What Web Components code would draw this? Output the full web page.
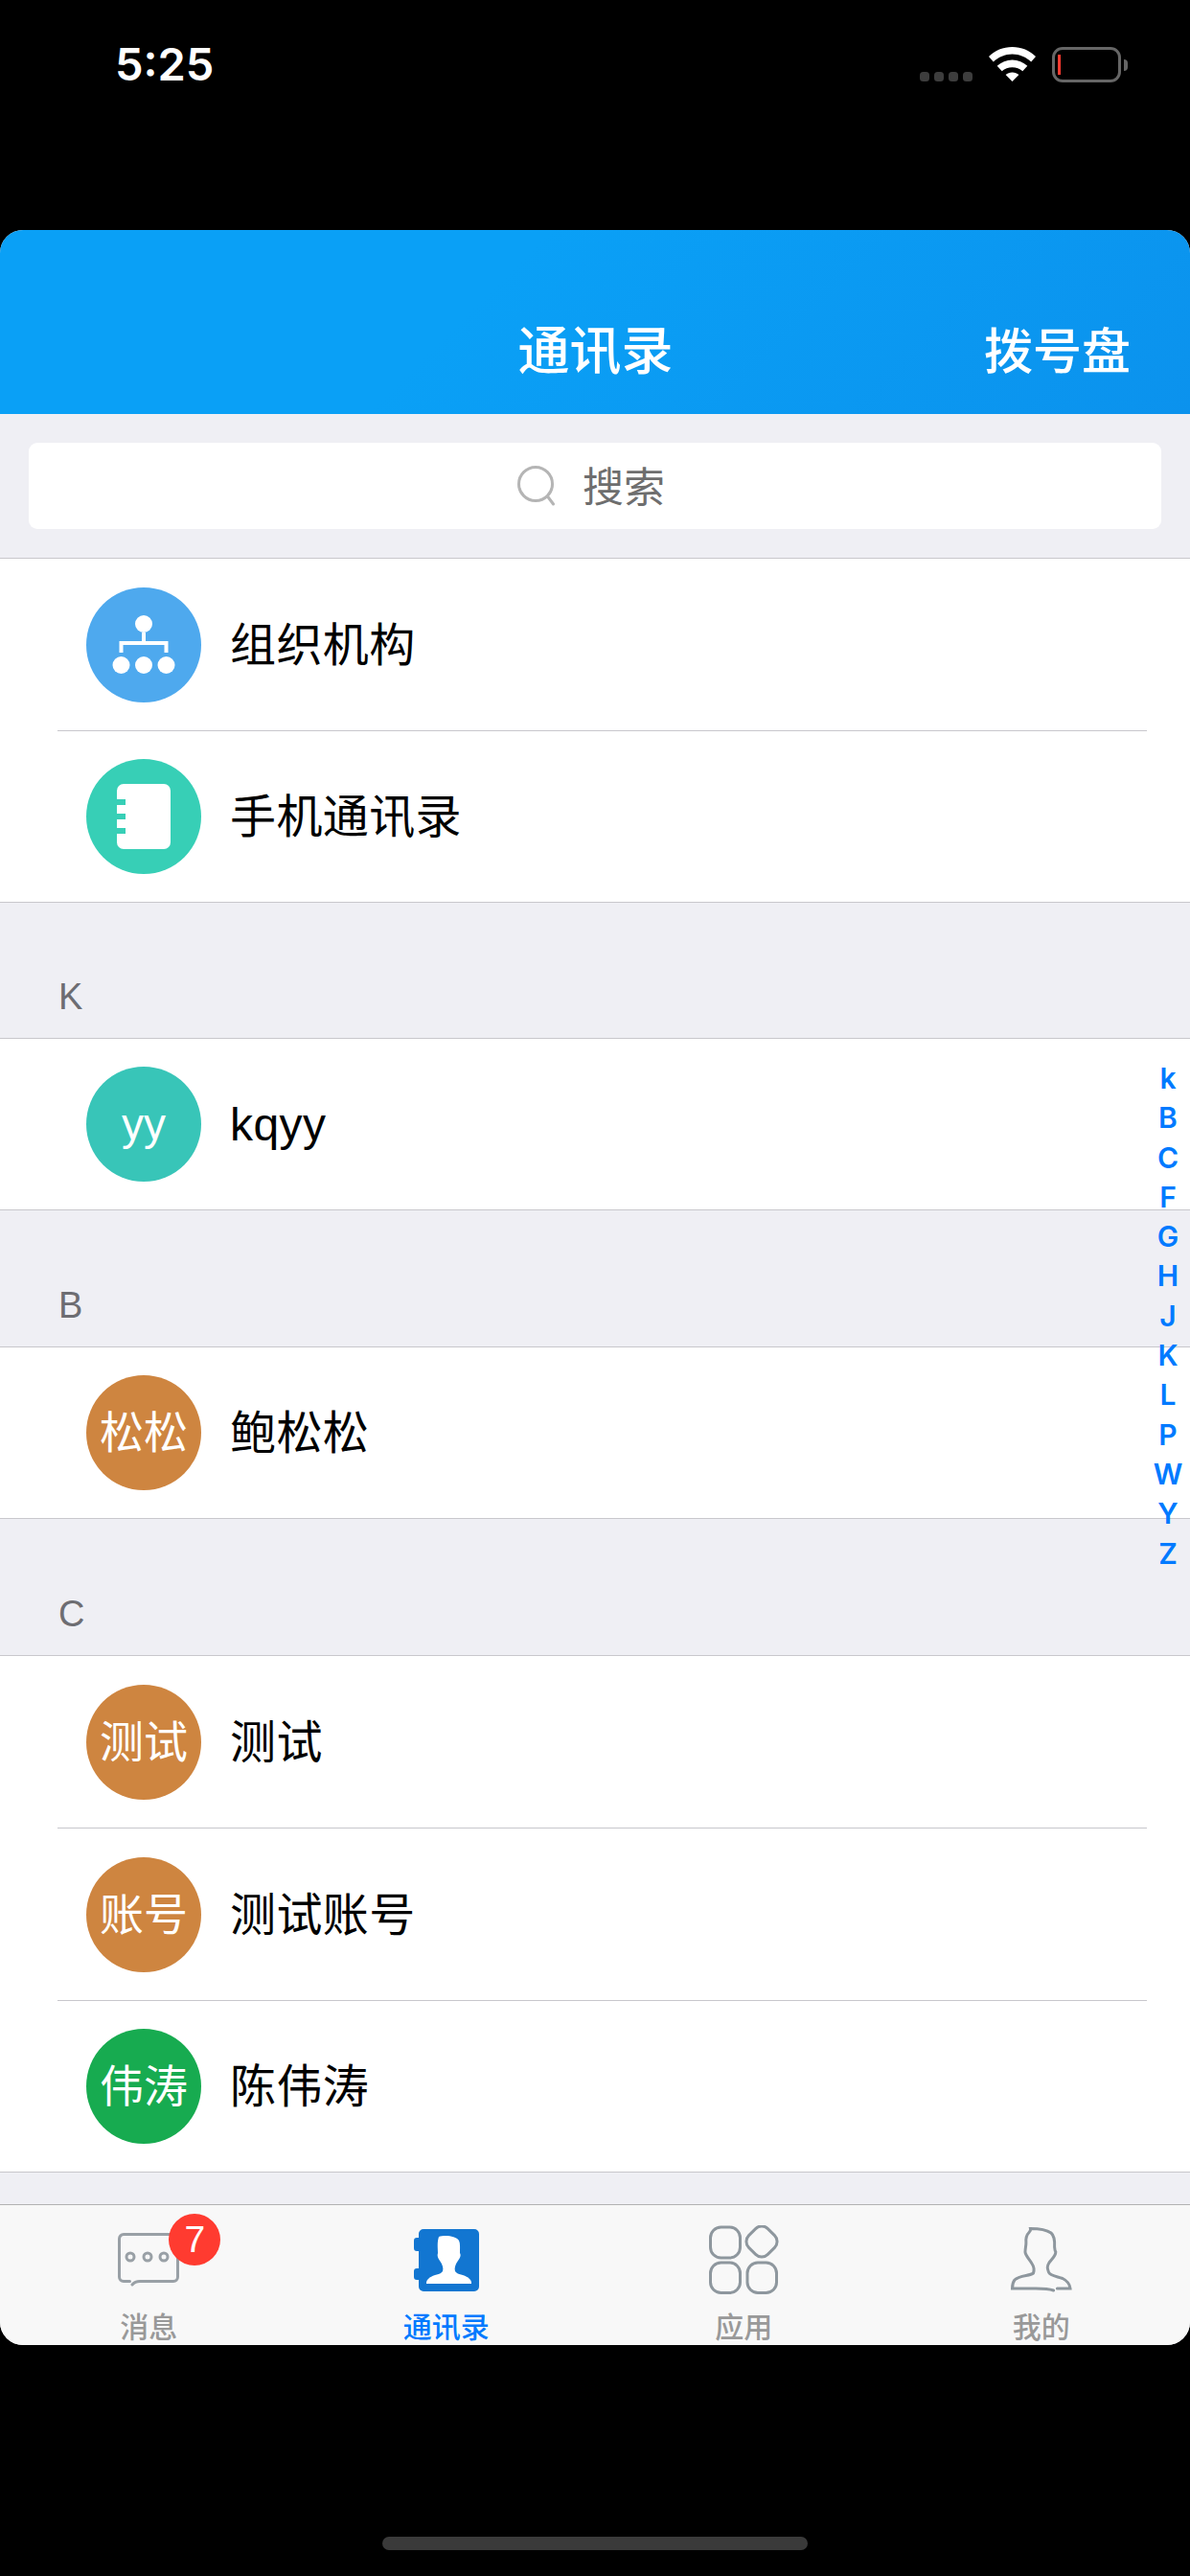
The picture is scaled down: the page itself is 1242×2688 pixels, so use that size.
<!DOCTYPE html>
<html lang="zh-CN">
<head>
<meta charset="utf-8">
<title>通讯录</title>
<style>
  html, body { margin: 0; padding: 0; background: #000; }
  body { font-family: "Liberation Sans", "Noto Sans CJK SC", sans-serif; }
</style>
</head>
<body>
<app-shell>
  <status-bar slot="status" time="5:25"></status-bar>
  <nav-header slot="window" title-text="通讯录" action="拨号盘"></nav-header>
  <search-box slot="window" placeholder="搜索"></search-box>
  <contact-list slot="window">
    <contact-group>
      <contact-row name="组织机构" color="#4ea9ee">
        <svg slot="avatar" width="120" height="120" viewBox="0 0 120 120" fill="#fff">
          <circle cx="60" cy="38" r="9"/>
          <circle cx="36.500" cy="81" r="9"/><circle cx="60" cy="81" r="9"/><circle cx="83.500" cy="81" r="9"/>
          <path d="M60 47v11M36.500 68V58h47v10" fill="none" stroke="#fff" stroke-width="4"/>
        </svg>
      </contact-row>
      <contact-row name="手机通讯录" color="#37cfb6" last>
        <svg slot="avatar" width="120" height="120" viewBox="0 0 120 120">
          <rect x="32" y="26" width="56" height="68" rx="7" fill="#fff"/>
          <path d="M32 45h9M32 60h9M32 75h9" stroke="#37cfb6" stroke-width="6"/>
        </svg>
      </contact-row>
    </contact-group>
    <contact-group letter="K">
      <contact-row name="kqyy" color="#38c5b8" last>yy</contact-row>
    </contact-group>
    <contact-group letter="B">
      <contact-row name="鲍松松" color="#ce8540" last>松松</contact-row>
    </contact-group>
    <contact-group letter="C">
      <contact-row name="测试" color="#ce8540">测试</contact-row>
      <contact-row name="测试账号" color="#ce8540">账号</contact-row>
      <contact-row name="陈伟涛" color="#17ab50" last>伟涛</contact-row>
    </contact-group>
  </contact-list>
  <index-bar slot="window" letters="k B C F G H J K L P W Y Z"></index-bar>
  <tab-bar slot="window">
    <tab-item label="消息" badge="7">
      <svg width="64" height="56" viewBox="0 0 64 56" fill="none" stroke="#99a0a6" stroke-width="3">
        <path d="M12.500 50.500H6A4.500 4.500 0 0 1 1.500 46V6A4.500 4.500 0 0 1 6 1.500h52A4.500 4.500 0 0 1 62.500 6v40a4.500 4.500 0 0 1-4.500 4.500H23c-4 0-6 1-8 3.500" stroke-linecap="round"/>
        <circle cx="13" cy="25" r="4"/><circle cx="31" cy="25" r="4"/><circle cx="48" cy="25" r="4"/>
      </svg>
    </tab-item>
    <tab-item label="通讯录" active>
      <svg width="68" height="65" viewBox="0 0 68 65">
        <path fill="#1276d1" d="M10 0h53a5 5 0 0 1 5 5v55a5 5 0 0 1-5 5H10a5 5 0 0 1-5-5v-7H3a3 3 0 0 1-3-3V44a3 3 0 0 1 3-3h2V23H3a3 3 0 0 1-3-3v-8a3 3 0 0 1 3-3h2V5a5 5 0 0 1 5-5z"/>
        <path fill="#fff" d="M26 8C32 6 44 7 47 12c1.500 3 1 8 1 13 1.500 3 0 5-2 8-3 4-4 8-3 11 1 2 4 3 8 4 6 2 9 5 9 8v1H13v-1c0-3 3-6 9-8 4-1 7-2 8-4 1-3 0-7-3-11-2-3-3-5-2-8 0-5-1-11 1-17z"/>
      </svg>
    </tab-item>
    <tab-item label="应用">
      <svg width="73" height="72" viewBox="0 0 73 72" fill="none" stroke="#8e979e" stroke-width="3">
        <rect x="1.500" y="2" width="31" height="32" rx="11"/>
        <rect x="1.500" y="39" width="31" height="31.500" rx="11"/>
        <rect x="40" y="39" width="30.500" height="31.500" rx="11"/>
        <rect x="41" y="3" width="28" height="28" rx="9" transform="rotate(45 55 17)"/>
      </svg>
    </tab-item>
    <tab-item label="我的">
      <svg width="64" height="68" viewBox="0 0 64 68" fill="none" stroke="#8e979e" stroke-width="3">
        <path d="M48.400 64H62C61.500 59 58 55.500 54 53.500 49 51.500 41 51 39.500 47 38 43 37.500 41 40 37 43 33 47 30 46.800 25.700 45.500 24 46 22 45.600 20.700 46 15 46 9.500 42 6 37 2.500 28 1.500 20.500 1.500 21 3.500 20 4.500 19 5.500 16 8.500 15.500 12 15.900 16 16 19 15 22 15 26 15.500 30 19 33 22 38 24 41 24.500 45 23.500 48 20 51 9 50 4 55 2 57.500 1.500 61 1.500 64H26C33 64 39 64 44.600 66" stroke-linecap="round"/>
      </svg>
    </tab-item>
  </tab-bar>
  <home-indicator slot="home"></home-indicator>
</app-shell>

<script>
class AppShell extends HTMLElement {
  constructor() {
    super();
    this.attachShadow({ mode: "open" });
    this.shadowRoot.innerHTML = `
      <style>
        :host { display: flex; flex-direction: column; width: 1242px; height: 2688px; background: #000; overflow: hidden; }
        .window {
          position: relative;
          display: flex; flex-direction: column;
          height: 2207px;
          background: #efeff4;
          border-radius: 24px;
          overflow: hidden;
        }
      </style>
      <slot name="status"></slot>
      <div class="window"><slot name="window"></slot></div>
      <slot name="home"></slot>
    `;
  }
}

class StatusBar extends HTMLElement {
  constructor() {
    super();
    this.attachShadow({ mode: "open" });
  }
  connectedCallback() {
    this.shadowRoot.innerHTML = `
      <style>
        :host { display: flex; height: 240px; box-sizing: border-box; padding: 40px 65px 0 120px; align-items: flex-start; color: #fff; }
        .time { font: 600 47px/56px Inter, "Liberation Sans", sans-serif; flex: 1; margin-top: -1px; }
        .icons { display: flex; align-items: flex-start; margin-top: 9px; }
        .dots { display: flex; gap: 5px; margin-top: 26px; margin-right: 17px; }
        .dots i { width: 10px; height: 10px; border-radius: 3.500px; background: #3d3d3d; }
        .wifi { margin-right: 17px; display: block; }
        .bat { position: relative; box-sizing: border-box; width: 72px; height: 37px; border: 3px solid #666; border-radius: 11px; }
        .bat::before { content: ""; position: absolute; left: 3px; top: 5px; width: 3px; height: 21px; background: #ff3b30; }
        .nub { width: 4px; height: 12px; margin: 13px 0 0 3px; background: #666; border-radius: 0 6px 6px 0; }
      </style>
      <div class="time">${this.getAttribute("time")}</div>
      <div class="icons">
        <div class="dots"><i></i><i></i><i></i><i></i></div>
        <svg class="wifi" width="49" height="36" viewBox="0 0 49 36" fill="#fff">
          <path d="M24.500 0C34 0 42.500 3.500 49 10l-4.800 5.500C39 10.500 32 7.500 24.500 7.500S10 10.500 4.800 15.500L0 10C6.500 3.500 15 0 24.500 0z"/>
          <path d="M24.500 13.500c6 0 11.500 2.300 15.800 6.300l-5 5.500c-3-2.600-6.700-4.100-10.800-4.100s-7.800 1.500-10.800 4.100l-5-5.500c4.300-4 9.800-6.300 15.800-6.300z"/>
          <path d="M24.500 26.500c2.700 0 5 .900 6.900 2.500l-6.900 7-6.900-7c1.900-1.600 4.200-2.500 6.900-2.500z"/>
        </svg>
        <div class="bat"></div>
        <div class="nub"></div>
      </div>
    `;
  }
}

class NavHeader extends HTMLElement {
  constructor() {
    super();
    this.attachShadow({ mode: "open" });
  }
  connectedCallback() {
    this.shadowRoot.innerHTML = `
      <style>
        :host { display: grid; grid-template-columns: 1fr auto 1fr; align-items: center; height: 192px; box-sizing: border-box; padding: 54px 62px 0 63px; color: #fff; background: linear-gradient(135deg, #0aa0f6 40%, #0b92ed 100%); }
        .title { font: 500 54px/72px "Noto Sans CJK SC", sans-serif; grid-column: 2; }
        .action { font: 500 51px/72px "Noto Sans CJK SC", sans-serif; justify-self: end; }
      </style>
      <div class="title">${this.getAttribute("title-text")}</div>
      <div class="action">${this.getAttribute("action")}</div>
    `;
  }
}

class SearchBox extends HTMLElement {
  constructor() {
    super();
    this.attachShadow({ mode: "open" });
  }
  connectedCallback() {
    this.shadowRoot.innerHTML = `
      <style>
        :host { display: block; padding: 30px 30px; height: 150px; box-sizing: border-box; }
        .box { display: flex; align-items: center; justify-content: center; gap: 26px; height: 90px; padding-right: 8px; box-sizing: border-box; background: #fff; border-radius: 9px; color: #6e6e6e; font: 400 43px/60px "Noto Sans CJK SC", sans-serif; }
        svg { display: block; }
        span { margin-bottom: 4px; }
      </style>
      <div class="box">
        <svg width="42" height="42" viewBox="0 0 42 42" fill="none" stroke="#b5b5b5" stroke-width="3">
          <circle cx="19" cy="19" r="17.500"/>
          <path d="M31.500 32l6 8" stroke-linecap="round"/>
        </svg>
        <span>${this.getAttribute("placeholder")}</span>
      </div>
    `;
  }
}

class ContactList extends HTMLElement {
  constructor() {
    super();
    this.attachShadow({ mode: "open" });
    this.shadowRoot.innerHTML = `
      <style>:host { display: block; height: 1718px; overflow: hidden; }</style>
      <slot></slot>
    `;
  }
}

class ContactGroup extends HTMLElement {
  constructor() {
    super();
    this.attachShadow({ mode: "open" });
  }
  connectedCallback() {
    const letter = this.getAttribute("letter");
    this.shadowRoot.innerHTML = `
      <style>
        :host { display: block; }
        .head { height: 142px; box-sizing: border-box; display: flex; align-items: flex-end; padding: 0 0 20px 61px; font: 400 38px/46px "Liberation Sans", sans-serif; color: #6d6d72; }
        :host(:nth-of-type(2)) .head { height: 141px; }
        .rows { background: #fff; border-top: 1px solid #c8c7cc; border-bottom: 1px solid #c8c7cc; }
      </style>
      ${letter ? `<div class="head">${letter}</div>` : ""}
      <div class="rows"><slot></slot></div>
    `;
  }
}

class ContactRow extends HTMLElement {
  constructor() {
    super();
    this.attachShadow({ mode: "open" });
  }
  connectedCallback() {
    this.shadowRoot.innerHTML = `
      <style>
        :host { display: block; padding-left: 60px; padding-right: 45px; }
        .row { display: flex; align-items: center; gap: 30px; height: 178px; padding-left: 30px; box-sizing: border-box; }
        :host(:not([last])) .row { border-bottom: 1px solid #c8c7cc; height: 180px; }
        .avatar { width: 120px; height: 120px; flex: none; border-radius: 50%; display: flex; align-items: center; justify-content: center; color: #fff; background: ${this.getAttribute("color")}; font: 400 46px/60px "Liberation Sans", "Noto Sans CJK SC", sans-serif; }
        .name { font: 400 48px/60px "Liberation Sans", "Noto Sans CJK SC", sans-serif; letter-spacing: .4px; color: #000; margin-top: 2px; }
      </style>
      <div class="row">
        <div class="avatar"><slot name="avatar"><slot></slot></slot></div>
        <div class="name">${this.getAttribute("name")}</div>
      </div>
    `;
  }
}

class IndexBar extends HTMLElement {
  constructor() {
    super();
    this.attachShadow({ mode: "open" });
  }
  connectedCallback() {
    const letters = this.getAttribute("letters").split(" ");
    this.shadowRoot.innerHTML = `
      <style>
        :host { position: absolute; right: 0; top: 865px; width: 46px; display: flex; flex-direction: column; align-items: center; color: #007aff; font: 600 30px/41.300px Inter, "Liberation Sans", sans-serif; }
      </style>
      ${letters.map(l => `<span>${l}</span>`).join("")}
    `;
  }
}

class TabBar extends HTMLElement {
  constructor() {
    super();
    this.attachShadow({ mode: "open" });
    this.shadowRoot.innerHTML = `
      <style>
        :host { display: grid; grid-template-columns: repeat(4, 1fr); flex: 1; box-sizing: border-box; background: #f8f8f8; border-top: 1px solid #b2b2b2; }
      </style>
      <slot></slot>
    `;
  }
}

class TabItem extends HTMLElement {
  constructor() {
    super();
    this.attachShadow({ mode: "open" });
  }
  connectedCallback() {
    const badge = this.getAttribute("badge");
    this.shadowRoot.innerHTML = `
      <style>
        :host { display: flex; flex-direction: column; align-items: center; color: #999; }
        :host([active]) { color: #007aff; }
        .icon { position: relative; display: flex; align-items: center; justify-content: center; height: 72px; margin-top: 21px; }
        ::slotted(svg) { display: block; }
        .badge { position: absolute; left: 53px; top: -12px; width: 54px; height: 54px; border-radius: 50%; background: #ff3b30; color: #fff; display: flex; align-items: center; justify-content: center; font: 400 39px/54px "Liberation Sans", sans-serif; }
        .label { font: 500 30px/36px "Noto Sans CJK SC", sans-serif; margin-top: 14px; }
      </style>
      <div class="icon"><slot></slot>${badge ? `<span class="badge">${badge}</span>` : ""}</div>
      <div class="label">${this.getAttribute("label")}</div>
    `;
  }
}

class HomeIndicator extends HTMLElement {
  constructor() {
    super();
    this.attachShadow({ mode: "open" });
    this.shadowRoot.innerHTML = `
      <style>
        :host { display: flex; justify-content: center; padding-top: 200px; }
        div { width: 444px; height: 14px; border-radius: 7px; background: #3a3a3a; }
      </style>
      <div></div>
    `;
  }
}

customElements.define("app-shell", AppShell);
customElements.define("status-bar", StatusBar);
customElements.define("nav-header", NavHeader);
customElements.define("search-box", SearchBox);
customElements.define("contact-list", ContactList);
customElements.define("contact-group", ContactGroup);
customElements.define("contact-row", ContactRow);
customElements.define("index-bar", IndexBar);
customElements.define("tab-bar", TabBar);
customElements.define("tab-item", TabItem);
customElements.define("home-indicator", HomeIndicator);
</script>
</body>
</html>
